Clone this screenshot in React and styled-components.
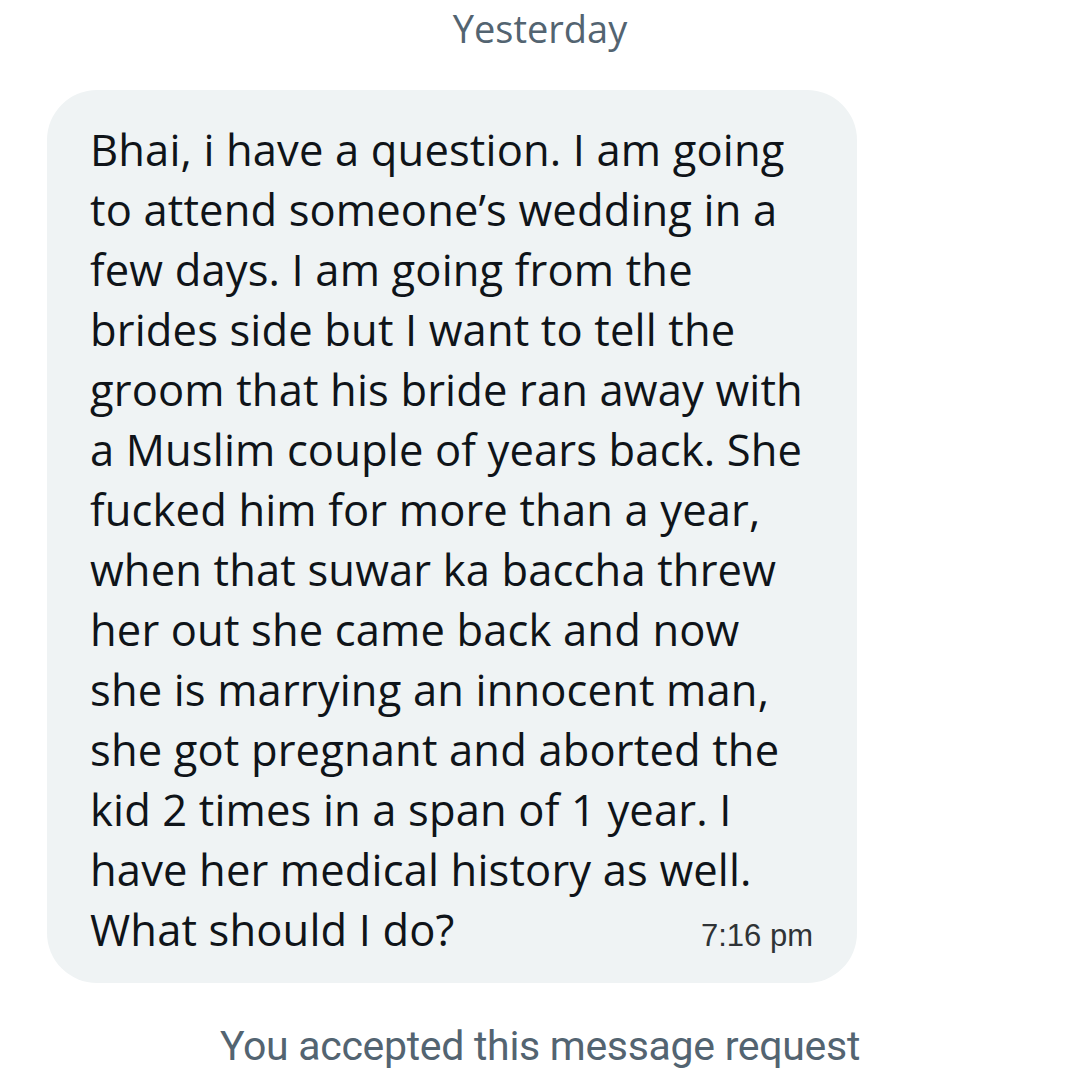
import React from "react";
import styled, { createGlobalStyle } from "styled-components";

const GlobalStyle = createGlobalStyle`
  html, body {
    margin: 0;
    padding: 0;
    background: #ffffff;
  }
  body {
    font-family: "Open Sans", "Noto Sans", sans-serif;
  }
`;

const lines = [
  "Bhai, i have a question. I am going",
  "to attend someone\u2019s wedding in a",
  "few days. I am going from the",
  "brides side but I want to tell the",
  "groom that his bride ran away with",
  "a Muslim couple of years back. She",
  "fucked him for more than a year,",
  "when that suwar ka baccha threw",
  "her out she came back and now",
  "she is marrying an innocent man,",
  "she got pregnant and aborted the",
  "kid 2 times in a span of 1 year. I",
  "have her medical history as well.",
  "What should I do?",
];

const Page = styled.div`
  width: 1080px;
  height: 1078px;
  overflow: hidden;
  display: flex;
  flex-direction: column;
`;

const DayLabel = styled.div`
  align-self: center;
  margin-top: 6px;
  font-size: 38px;
  line-height: 44px;
  color: #536471;
`;

const Bubble = styled.div`
  margin: 40px 0 0 47px;
  width: 810px;
  box-sizing: border-box;
  padding: 30px 44px 23px 43px;
  background: #eff3f4;
  border-radius: 50px;
`;

const Line = styled.div`
  font-size: 43.5px;
  line-height: 60px;
  letter-spacing: 0.15px;
  color: #0f1419;
  white-space: nowrap;
`;

const LastRow = styled.div`
  display: flex;
  align-items: baseline;
  justify-content: space-between;
`;

const Time = styled.span`
  font-family: "Liberation Sans", Arial, sans-serif;
  font-size: 31px;
  letter-spacing: 0;
  color: #2f3336;
`;

const Notice = styled.div`
  align-self: center;
  margin-top: 40px;
  font-family: Roboto, "Noto Sans", sans-serif;
  font-size: 41px;
  line-height: 46px;
  color: #536471;
  letter-spacing: -0.3px;
`;

export default function App() {
  const body = lines.slice(0, -1);
  const last = lines[lines.length - 1];
  return (
    <Page>
      <GlobalStyle />
      <DayLabel>Yesterday</DayLabel>
      <Bubble>
        {body.map((l) => (
          <Line key={l}>{l}</Line>
        ))}
        <LastRow>
          <Line>{last}</Line>
          <Time>7:16 pm</Time>
        </LastRow>
      </Bubble>
      <Notice>You accepted this message request</Notice>
    </Page>
  );
}
